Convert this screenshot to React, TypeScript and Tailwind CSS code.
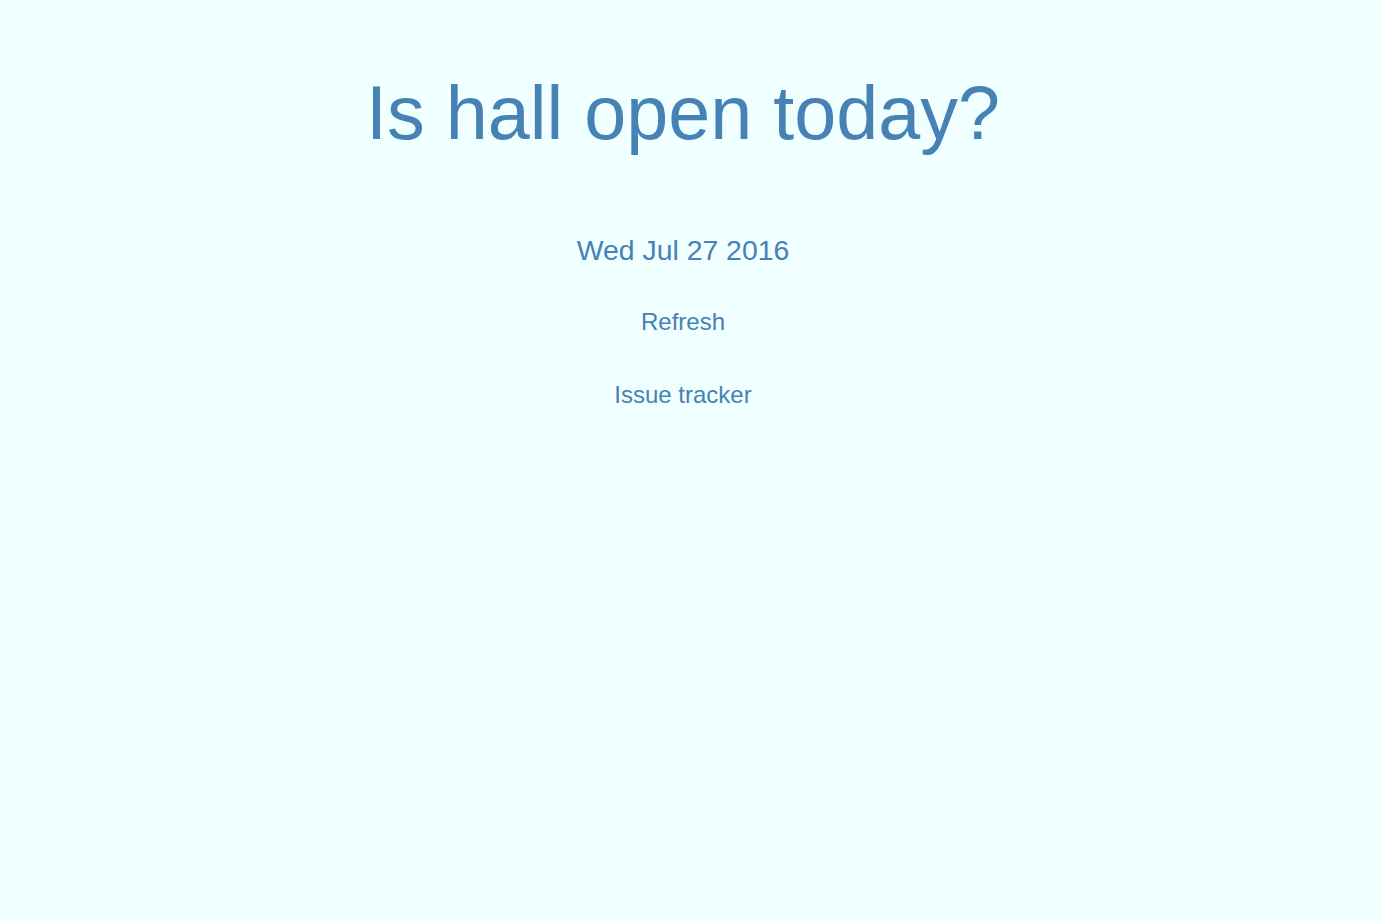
import React from 'react';

const App = () => {
  return (
    <div className="min-h-screen bg-[#f0ffff] text-[#4682b4] font-['Liberation_Sans',Arial,sans-serif]">
      <main className="flex flex-col items-center pr-[16px]">
        <h1 className="mt-[76px] text-[75.5px] leading-[75px] font-normal">Is hall open today?</h1>
        <p className="mt-[85px] text-[28.4px] leading-[28px]">Wed Jul 27 2016</p>
        <a href="#" className="mt-[46px] text-[24px] leading-[24px]">
          Refresh
        </a>
        <a href="#" className="mt-[49px] text-[24px] leading-[24px]">
          Issue tracker
        </a>
      </main>
    </div>
  );
};

export default App;
